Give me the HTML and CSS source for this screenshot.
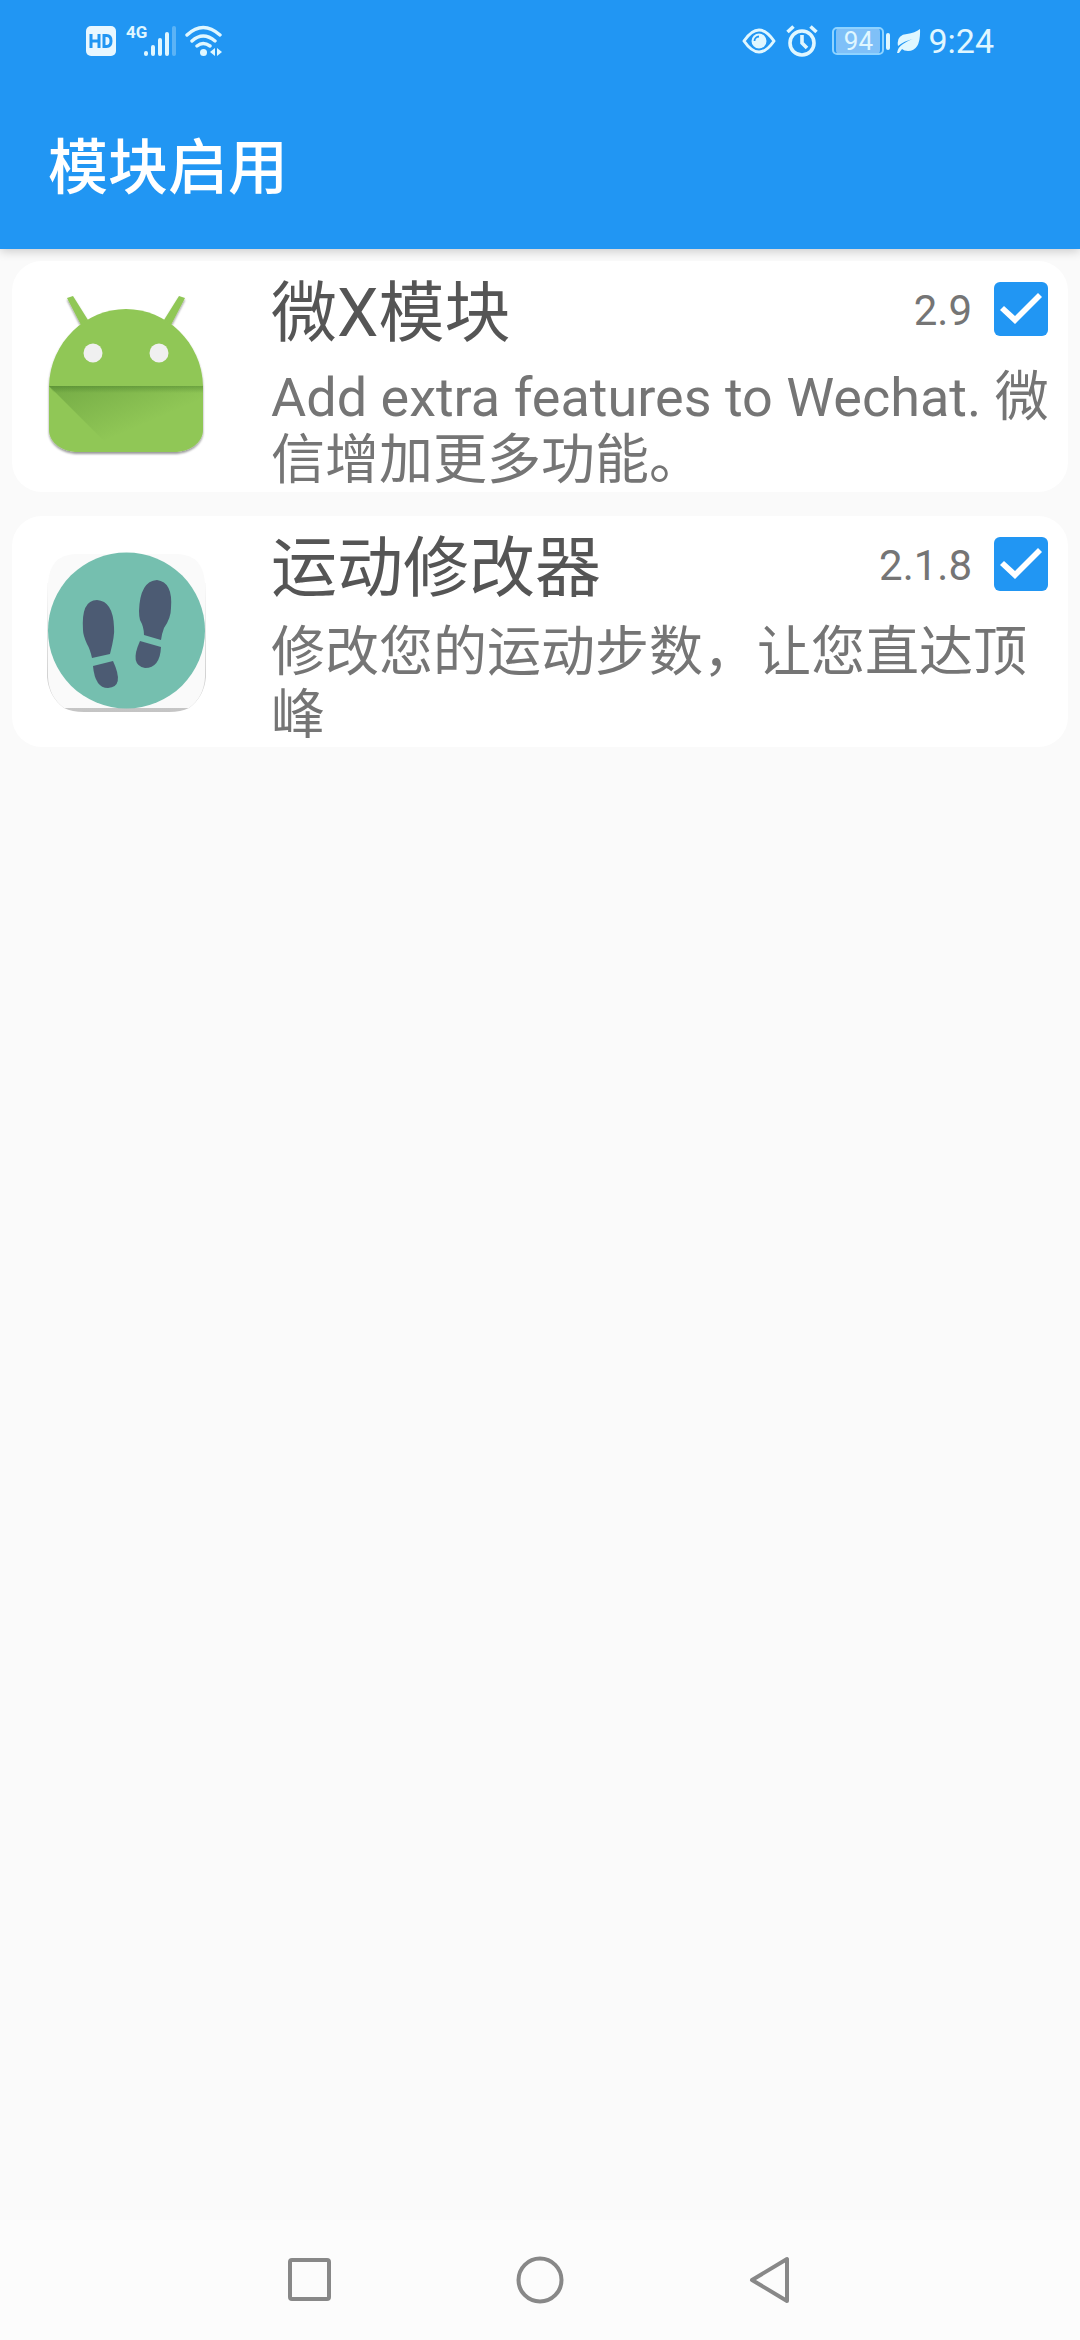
FILE: index.html
```html
<!DOCTYPE html>
<html lang="zh-CN">
<head>
<meta charset="utf-8">
<meta name="viewport" content="width=device-width, initial-scale=1">
<title>模块启用</title>
<link rel="stylesheet" href="styles.css">
</head>
<body>
<header class="top">
  <div class="status">
    <div class="status-group">
      <svg class="ic" width="30" height="30" viewBox="0 0 30 30" aria-hidden="true"><rect width="30" height="30" rx="5" fill="#e8f7ff"/><path d="M5 8v14M13 8v14M5 15h8M18 9.500v11h2.500q4.500 0 4.500-5.500t-4.500-5.500z" fill="none" stroke="#2196f3" stroke-width="3"/></svg>
      <span class="net">4G</span>
      <svg class="ic bars" width="34" height="32" viewBox="0 0 34 32" aria-hidden="true"><g stroke="#e0f7ff" stroke-width="4" stroke-linecap="round"><path d="M3 28v1M10 22v7M17 15v14M24 9v20"/><path d="M31 3v26" opacity=".3"/></g></svg>
      <svg class="ic" width="38" height="32" viewBox="0 0 38 32" aria-hidden="true"><g fill="none" stroke="#e0f7ff" stroke-width="3.400" stroke-linecap="round"><path d="M2 10Q18 -5 35 10M7 16Q18 6 30 16M12 21Q18 16 25 21"/></g><circle cx="18.500" cy="27.500" r="3.500" fill="#e0f7ff"/><path d="M30 23v8l-5-4zM32 23v8l5-4z" fill="#e0f7ff"/></svg>
    </div>
    <div class="status-group">
      <svg class="ic" width="34" height="28" viewBox="0 0 34 28" aria-hidden="true"><path d="M2 14Q17-8 32 14Q17 36 2 14z" fill="none" stroke="#e0f7ff" stroke-width="3" stroke-linejoin="round"/><circle cx="17" cy="14" r="7.500" fill="#e0f7ff"/><path d="M12.500 14a4.500 4.500 0 0 1 4.500-4.500" fill="none" stroke="#2196f3" stroke-width="1.800"/></svg>
      <svg class="ic alarm" width="32" height="32" viewBox="0 0 32 32" aria-hidden="true"><g fill="none" stroke="#e0f7ff" stroke-width="3.600"><circle cx="16" cy="18" r="12"/><path d="M16 10v8l5 5M1.500 7l6-5.500M30.500 7l-6-5.500"/></g></svg>
      <span class="battery">94</span>
      <svg class="ic cap" width="4" height="17" viewBox="0 0 4 17" aria-hidden="true"><rect width="4" height="17" rx="2" fill="#e0f7ff"/></svg>
      <svg class="ic" width="24" height="26" viewBox="0 0 24 26" aria-hidden="true"><path d="M23 1Q24 23 11 23Q7 23 5 21L2 25H0Q1 19 6 16Q12 12 16 11Q7 13 1 18Q-1 7 10 6Q18 5 23 1z" fill="#e0f7ff"/></svg>
      <time class="clock">9:24</time>
    </div>
  </div>
  <h1 class="title">模块启用</h1>
</header>
<main class="list">
  <article class="card">
    <svg class="app" width="160" height="166" viewBox="-1 -2 160 166" role="img" aria-label="微X模块">
      <defs>
        <linearGradient id="fold" x1="0" y1="0" x2="1" y2="1"><stop offset="0" stop-color="#33691e" stop-opacity=".3"/><stop offset=".6" stop-color="#33691e" stop-opacity="0"/></linearGradient>
        <linearGradient id="lip" x1="0" y1="0" x2="0" y2="1"><stop offset="0" stop-color="#33691e" stop-opacity=".35"/><stop offset="1" stop-color="#33691e" stop-opacity="0"/></linearGradient>
        <filter id="drop" x="-10%" y="-10%" width="120%" height="125%"><feDropShadow dx="0" dy="2" stdDeviation="1" flood-color="#000" flood-opacity=".4"/></filter>
      </defs>
      <g filter="url(#drop)" fill="#90c756">
        <path d="M19 2l6-2 15 24-7 5zM137 2l-6-2-15 24 7 5z"/>
        <path d="M1 90C2 46 38 13 78 13S154 46 155 90V134C155 147 141 156 126 156H30C15 156 1 147 1 134z"/>
      </g>
      <path d="M1 90H155V134C155 147 141 156 126 156H67z" fill="url(#fold)"/>
      <path d="M1 90H155v7H6z" fill="url(#lip)"/>
      <circle cx="45" cy="57" r="9.500" fill="#f0f0f0"/><circle cx="111" cy="57" r="9.500" fill="#f0f0f0"/>
    </svg>
    <div class="body">
      <div class="row">
        <label class="name" for="m1">微X模块</label>
        <span class="ver">2.9</span>
        <input class="check" type="checkbox" id="m1" checked>
      </div>
      <p class="desc">Add extra features to Wechat. 微信增加更多功能。</p>
    </div>
  </article>
  <article class="card">
    <svg class="app" width="160" height="166" viewBox="0 -2 160 166" role="img" aria-label="运动修改器">
      <defs>
        <linearGradient id="edge" x1="0" y1="0" x2="0" y2="1"><stop offset="0" stop-color="#fafafa"/><stop offset=".5" stop-color="#ddd"/><stop offset="1" stop-color="#c4c4c4"/></linearGradient>
      </defs>
      <path d="M0 32H159V126Q157 146 142 157Q134 161 122 161H37Q25 161 17 157Q2 146 0 126z" fill="url(#edge)"/>
      <path d="M1 32Q3 4 28 3H131Q156 4 158 32V126Q157 146 142 157H17Q2 146 1 126z" fill="#fafafa"/>
      <ellipse cx="79.500" cy="79.500" rx="78.500" ry="78" fill="#75bfaf"/>
      <g fill="#4c5b73">
        <path d="M36 79Q34 49 50 49Q66 50 67 76Q68 84 63 103L45 107Q43 98 40 93Q36 84 36 79z"/>
        <path d="M46 115L66 110Q78 136 61 137Q48 137 46 115z"/>
        <path d="M92 60Q93 30 110 29Q126 31 124 57Q124 67 117 77Q115 82 114 89L97 84Q97 76 93 69Q92 65 92 60z"/>
        <path d="M93 90L114 96Q113 117 98 117Q82 114 93 90z"/>
      </g>
    </svg>
    <div class="body">
      <div class="row">
        <label class="name" for="m2">运动修改器</label>
        <span class="ver">2.1.8</span>
        <input class="check" type="checkbox" id="m2" checked>
      </div>
      <p class="desc">修改您的运动步数，让您直达顶峰</p>
    </div>
  </article>
</main>
<nav class="nav">
  <button class="key" aria-label="最近任务"><svg width="48" height="48" viewBox="0 0 48 48"><rect x="5" y="4" width="39" height="39" rx="2"/></svg></button>
  <button class="key" aria-label="主页"><svg width="48" height="48" viewBox="0 0 48 48"><circle cx="24" cy="24" r="21.500"/></svg></button>
  <button class="key" aria-label="返回"><svg width="48" height="48" viewBox="0 0 48 48"><path d="M40 3V45L5 24z"/></svg></button>
</nav>
</body>
</html>
```
FILE: styles.css
```css
* { box-sizing: border-box; }
body {
  margin: 0;
  min-height: 100vh;
  display: flex;
  flex-direction: column;
  background: #fafafa;
  font-family: Roboto, "Noto Sans CJK SC", sans-serif;
}
.top {
  position: relative;
  background: #2196f3;
  color: #fff;
  box-shadow: 0 2px 10px rgba(0, 0, 0, .2);
}
.status {
  height: 82px;
  padding: 0 86px;
  display: flex;
  align-items: center;
  justify-content: space-between;
  color: #e0f7ff;
}
.status-group { display: flex; align-items: center; }
.ic { display: block; flex: none; }
.net {
  width: 17px;
  margin: 0 0 18px 10px;
  font: 700 17px/20px Roboto, sans-serif;
}
.bars { margin-right: 8px; }
.alarm { margin: 0 14px 0 10px; }
.battery {
  width: 52px;
  height: 28px;
  border: 2px solid #8fd3ff;
  border-radius: 5px;
  padding: 0 2px;
  background: #7fc0f8 content-box;
  font-size: 26px;
  line-height: 25px;
  text-align: center;
}
.cap { margin: 0 7px 0 2px; }
.clock { margin-left: 7px; font-size: 34px; line-height: 40px; }
.title {
  margin: 0;
  padding: 47px 48px 40px;
  font-size: 60px;
  line-height: 80px;
  font-weight: 500;
}
.list {
  flex: 1;
  padding: 12px;
  display: flex;
  flex-direction: column;
  gap: 24px;
}
.card {
  display: flex;
  align-items: center;
  gap: 64px;
  padding: 0 12px 0 35px;
  border-radius: 30px;
  background: #fff;
}
.app { flex: none; }
.body { flex: 1; min-width: 0; padding-top: 12px; }
.row {
  display: flex;
  align-items: center;
  height: 82px;
  margin-bottom: 11px;
  padding-right: 8px;
}
.name { flex: 1; font-size: 66px; line-height: 78px; color: #555; }
.ver { margin-bottom: 6px; font-size: 42px; line-height: 50px; color: #757575; }
.check {
  appearance: none;
  width: 54px;
  height: 54px;
  margin: 0 0 10px 22px;
  border-radius: 6px;
  background: #2196f3;
  display: grid;
  place-items: center;
}
.check::before {
  content: "";
  width: 42px;
  height: 32px;
  background: #fff;
  clip-path: polygon(0 17px, 4px 13px, 15px 23px, 38px 0, 42px 4px, 15px 31px);
}
.check:not(:checked) { background: #fff; border: 5px solid #757575; }
.desc { margin: 0; font-size: 54px; line-height: 63px; color: #757575; }
.nav {
  height: 120px;
  padding: 0 193px;
  display: grid;
  grid-template-columns: repeat(3, 1fr);
  background: #fcfcfc;
}
.key {
  display: grid;
  place-items: center;
  padding: 0;
  border: 0;
  background: none;
}
.key svg { fill: none; stroke: #888; stroke-width: 4; stroke-linejoin: round; }
```
